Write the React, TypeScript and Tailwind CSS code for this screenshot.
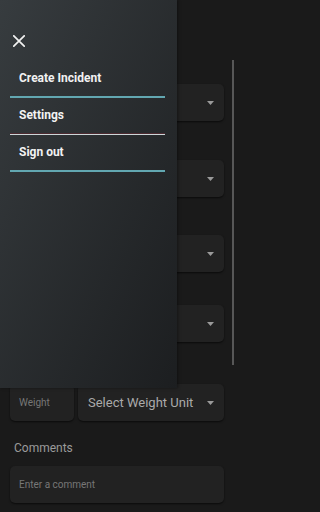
import React from "react";

const font = { fontFamily: "Roboto, 'Noto Sans', sans-serif" };

const Caret: React.FC = () => (
  <svg width="7" height="4" viewBox="0 0 7 4" className="shrink-0">
    <path d="M0 0 L7 0 L3.5 4 Z" fill="#9a9a9a" />
  </svg>
);

const SelectField: React.FC<{ value?: string; className?: string }> = ({ value, className }) => (
  <div className={className}>
    <div className="h-4 mb-[10px]" />
    <div className="h-[37px] rounded-[5px] bg-[#222222] shadow-[0_1px_2px_rgba(0,0,0,0.6)] flex items-center justify-between pl-[10px] pr-[10px]">
      <span className="text-[13px] text-[#aaaaaa]">{value}</span>
      <Caret />
    </div>
  </div>
);

const MenuItem: React.FC<{ label: string; line?: "teal" | "red" }> = ({ label, line = "teal" }) => (
  <div>
    <div className="pl-[9px] h-4 text-[12px] leading-4 font-bold text-[#f2f2f2]">{label}</div>
    {line === "teal" ? (
      <div className="mt-[10px] h-[2px] bg-[#62a7b1]" />
    ) : (
      <div className="mt-[10px]">
        <div className="h-px bg-[#4c2a30]" />
        <div className="h-px bg-[#cdd6d8]" />
      </div>
    )}
    <div className="h-[9px]" />
  </div>
);

export default function App() {
  return (
    <div className="w-full h-screen min-h-[512px] bg-[#1a1a1a]" style={font}>
      <div className="relative w-[237px] h-[512px] overflow-hidden bg-[#1a1a1a]">
        {/* form behind the drawer */}
        <div className="pl-[10px] pr-[13px] pt-[58px]">
          <SelectField />
          <SelectField className="mt-[13px]" />
          <SelectField className="mt-[12px]" />
          <SelectField className="mt-[7px]" />

          <div className="mt-[16px]">
            <div className="h-4 mb-[10px]" />
            <div className="flex gap-1">
              <div className="w-16 h-[37px] rounded-[5px] bg-[#222222] shadow-[0_1px_2px_rgba(0,0,0,0.6)] flex items-center pl-[9px] text-[10px] text-[#777777]">
                Weight
              </div>
              <div className="flex-1 h-[37px] rounded-[5px] bg-[#222222] shadow-[0_1px_2px_rgba(0,0,0,0.6)] flex items-center justify-between pl-[10px] pr-[10px]">
                <span className="text-[13px] text-[#aaaaaa]">Select Weight Unit</span>
                <Caret />
              </div>
            </div>
          </div>

          <div className="mt-[19px]">
            <div className="h-4 mb-[10px] pl-1 text-[12px] leading-4 text-[#9a9a9a]">Comments</div>
            <div className="h-[37px] rounded-[5px] bg-[#222222] shadow-[0_1px_2px_rgba(0,0,0,0.6)] flex items-center pl-[9px] text-[10px] text-[#777777]">
              Enter a comment
            </div>
          </div>
        </div>

        {/* scrollbar */}
        <div className="absolute right-[3px] top-[60px] w-[2px] h-[305px] bg-[#575757]" />

        {/* drawer */}
        <div className="absolute left-0 top-0 w-[177px] h-[388px] bg-gradient-to-br from-[#373c3f] to-[#1c1e20] shadow-[1px_0_3px_rgba(0,0,0,0.4)] px-[10px] pt-[35px]">
          <button className="ml-[3px] block w-3 h-3">
            <svg width="12" height="12" viewBox="0 0 12 12">
              <path d="M0.8 0.8 L11.2 11.2 M11.2 0.8 L0.8 11.2" stroke="#f2f2f2" strokeWidth="1.7" strokeLinecap="round" />
            </svg>
          </button>
          <div className="mt-[23px] w-[155px]">
            <MenuItem label="Create Incident" />
            <MenuItem label="Settings" line="red" />
            <MenuItem label="Sign out" />
          </div>
        </div>
      </div>
    </div>
  );
}
